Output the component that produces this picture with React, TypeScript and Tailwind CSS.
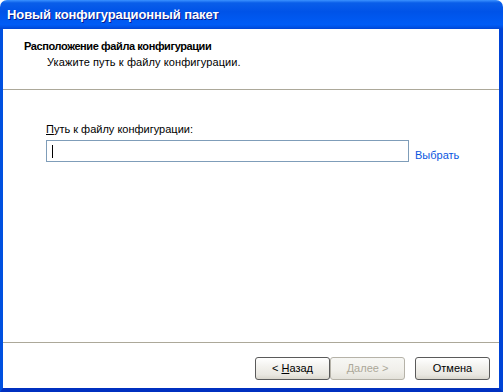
import React from "react";

const font = { fontFamily: '"Liberation Sans", Arial, sans-serif' };

function XpButton({ children, disabled }: { children: React.ReactNode; disabled?: boolean }) {
  return (
    <div
      className={
        "w-[75px] h-[23px] flex items-center justify-center rounded-[3px] border text-[11px] " +
        (disabled
          ? "border-[#b5b2a8] text-[#aca899] bg-[linear-gradient(to_bottom,#f7f7f4_0%,#f0efea_60%,#e4e2da_100%)]"
          : "border-[#5a5a5a] text-black bg-[linear-gradient(to_bottom,#ffffff_0%,#f3f2ee_40%,#e9e7e1_80%,#d9d6cd_100%)]")
      }
    >
      {children}
    </div>
  );
}

export default function App() {
  return (
    <div className="w-[503px] h-[392px] flex flex-col bg-white" style={font}>
      {/* Title bar */}
      <div className="h-[29px] shrink-0 rounded-t-[7px] flex items-center pl-[7px] bg-[linear-gradient(to_bottom,#3b92ff_0%,#0a5ee9_10%,#0053e8_40%,#005cf6_85%,#0052e6_93%,#0044d4_100%)]">
        <span
          className="text-white font-bold text-[13px] leading-none tracking-[-0.1px] [text-shadow:1px_1px_0_#0a1a8c]"
          style={font}
        >
          Новый конфигурационный пакет
        </span>
      </div>
      {/* Body */}
      <div className="flex-1 flex flex-col border-l-[3px] border-r-[4px] border-b-[4px] border-l-[#0050e0] border-r-[#0044d6] border-b-[#0030c0] bg-white">
        {/* Header */}
        <div className="h-[60px] shrink-0 pt-[9px] pl-[21px] text-[11px] leading-[16px] text-black">
          <div className="font-bold tracking-[-0.4px]">Расположение файла конфигурации</div>
          <div className="pl-[23px] tracking-[0.1px]">Укажите путь к файлу конфигурации.</div>
        </div>
        <div className="h-px bg-[#aca899] shrink-0" />
        {/* Content */}
        <div className="flex-1 pt-[31px] pl-[43px] text-[11px] leading-[16px] text-black">
          <div>
            <span className="underline">П</span>уть к файлу конфигурации:
          </div>
          <div className="mt-[3px] flex items-end">
            <div className="w-[363px] h-[22px] border border-[#7f9db9] bg-white flex items-center pl-[5px]">
              <span className="w-px h-[13px] bg-black" />
            </div>
            <span className="ml-[6px] text-[#0a56e0] leading-[16px] -mb-[1px]">Выбрать</span>
          </div>
        </div>
        <div className="h-px bg-[#aca899] shrink-0" />
        {/* Footer */}
        <div className="h-[45px] shrink-0 flex items-start justify-end pt-[14px] pr-[9px]">
          <XpButton>
            &lt; <span className="underline ml-[3px]">Н</span>азад
          </XpButton>
          <XpButton disabled>
            <span className="underline">Д</span>алее &gt;
          </XpButton>
          <div className="w-[10px]" />
          <XpButton>Отмена</XpButton>
        </div>
      </div>
    </div>
  );
}
